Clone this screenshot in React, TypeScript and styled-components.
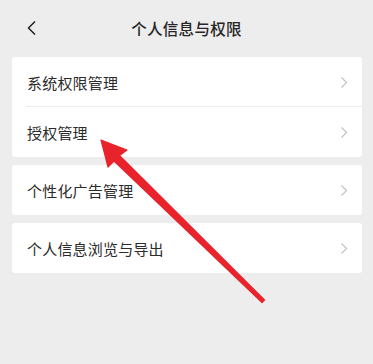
import React from "react";
import styled, { createGlobalStyle } from "styled-components";

const Global = createGlobalStyle`
  html, body { margin: 0; padding: 0; background: #ededed; }
  body { font-family: "Noto Sans CJK SC", "Noto Sans", sans-serif; }
`;

const Page = styled.div`
  position: relative;
  width: 373px;
  height: 364px;
  background: #ededed;
  overflow: hidden;
`;

const Header = styled.div`
  position: relative;
  height: 57px;
  display: flex;
  align-items: center;
  justify-content: center;
  padding-bottom: 1px;
  box-sizing: border-box;
`;

const Back = styled.div`
  position: absolute;
  left: 26px;
  top: 20px;
  width: 12px;
  height: 16px;
  display: flex;
`;

const Title = styled.div`
  font-size: 15.5px;
  font-weight: 500;
  color: #262626;
  letter-spacing: 0.3px;
`;

const List = styled.div`
  display: flex;
  flex-direction: column;
  gap: 8px;
  padding: 0 11px 0 12px;
`;

const Card = styled.div`
  background: #fff;
  border-radius: 3px;
  display: flex;
  flex-direction: column;
`;

const Row = styled.div<{ $divider?: boolean }>`
  height: 50px;
  display: flex;
  align-items: center;
  justify-content: space-between;
  padding: 0 14px 0 15px;
  position: relative;
  box-sizing: border-box;
  ${(p) =>
    p.$divider
      ? `&::after { content: ""; position: absolute; left: 14px; right: 0; bottom: 0; height: 1px; background: #ececec; }`
      : ""}
`;

const Label = styled.span`
  font-size: 15px;
  color: #2b2b2b;
  letter-spacing: 0.2px;
`;

const Chevron = () => (
  <svg width="8" height="13" viewBox="0 0 8 13">
    <path d="M1.5 1.5 L6.5 6.5 L1.5 11.5" fill="none" stroke="#c4c4c4" strokeWidth="1.3" />
  </svg>
);

const Overlay = styled.svg`
  position: absolute;
  left: 0;
  top: 0;
  pointer-events: none;
`;

const items = [
  ["系统权限管理", "授权管理"],
  ["个性化广告管理"],
  ["个人信息浏览与导出"],
];

export default function App() {
  return (
    <Page>
      <Global />
      <Header>
        <Back>
          <svg width="12" height="16" viewBox="0 0 12 16">
            <path d="M9 1.5 L2.5 8 L9 14.5" fill="none" stroke="#222" strokeWidth="1.5" />
          </svg>
        </Back>
        <Title>个人信息与权限</Title>
      </Header>
      <List>
        {items.map((group, gi) => (
          <Card key={gi}>
            {group.map((t, i) => (
              <Row key={t} $divider={i < group.length - 1}>
                <Label>{t}</Label>
                <Chevron />
              </Row>
            ))}
          </Card>
        ))}
      </List>
      <Overlay width="373" height="364" viewBox="0 0 373 364">
        <polygon
          points="101,140 127,150 119.5,155.5 264.5,300 262,302.5 114,161 108,167"
          fill="#e8232b"
          stroke="#e8232b"
          strokeWidth="1.2"
          strokeLinejoin="round"
        />
      </Overlay>
    </Page>
  );
}
